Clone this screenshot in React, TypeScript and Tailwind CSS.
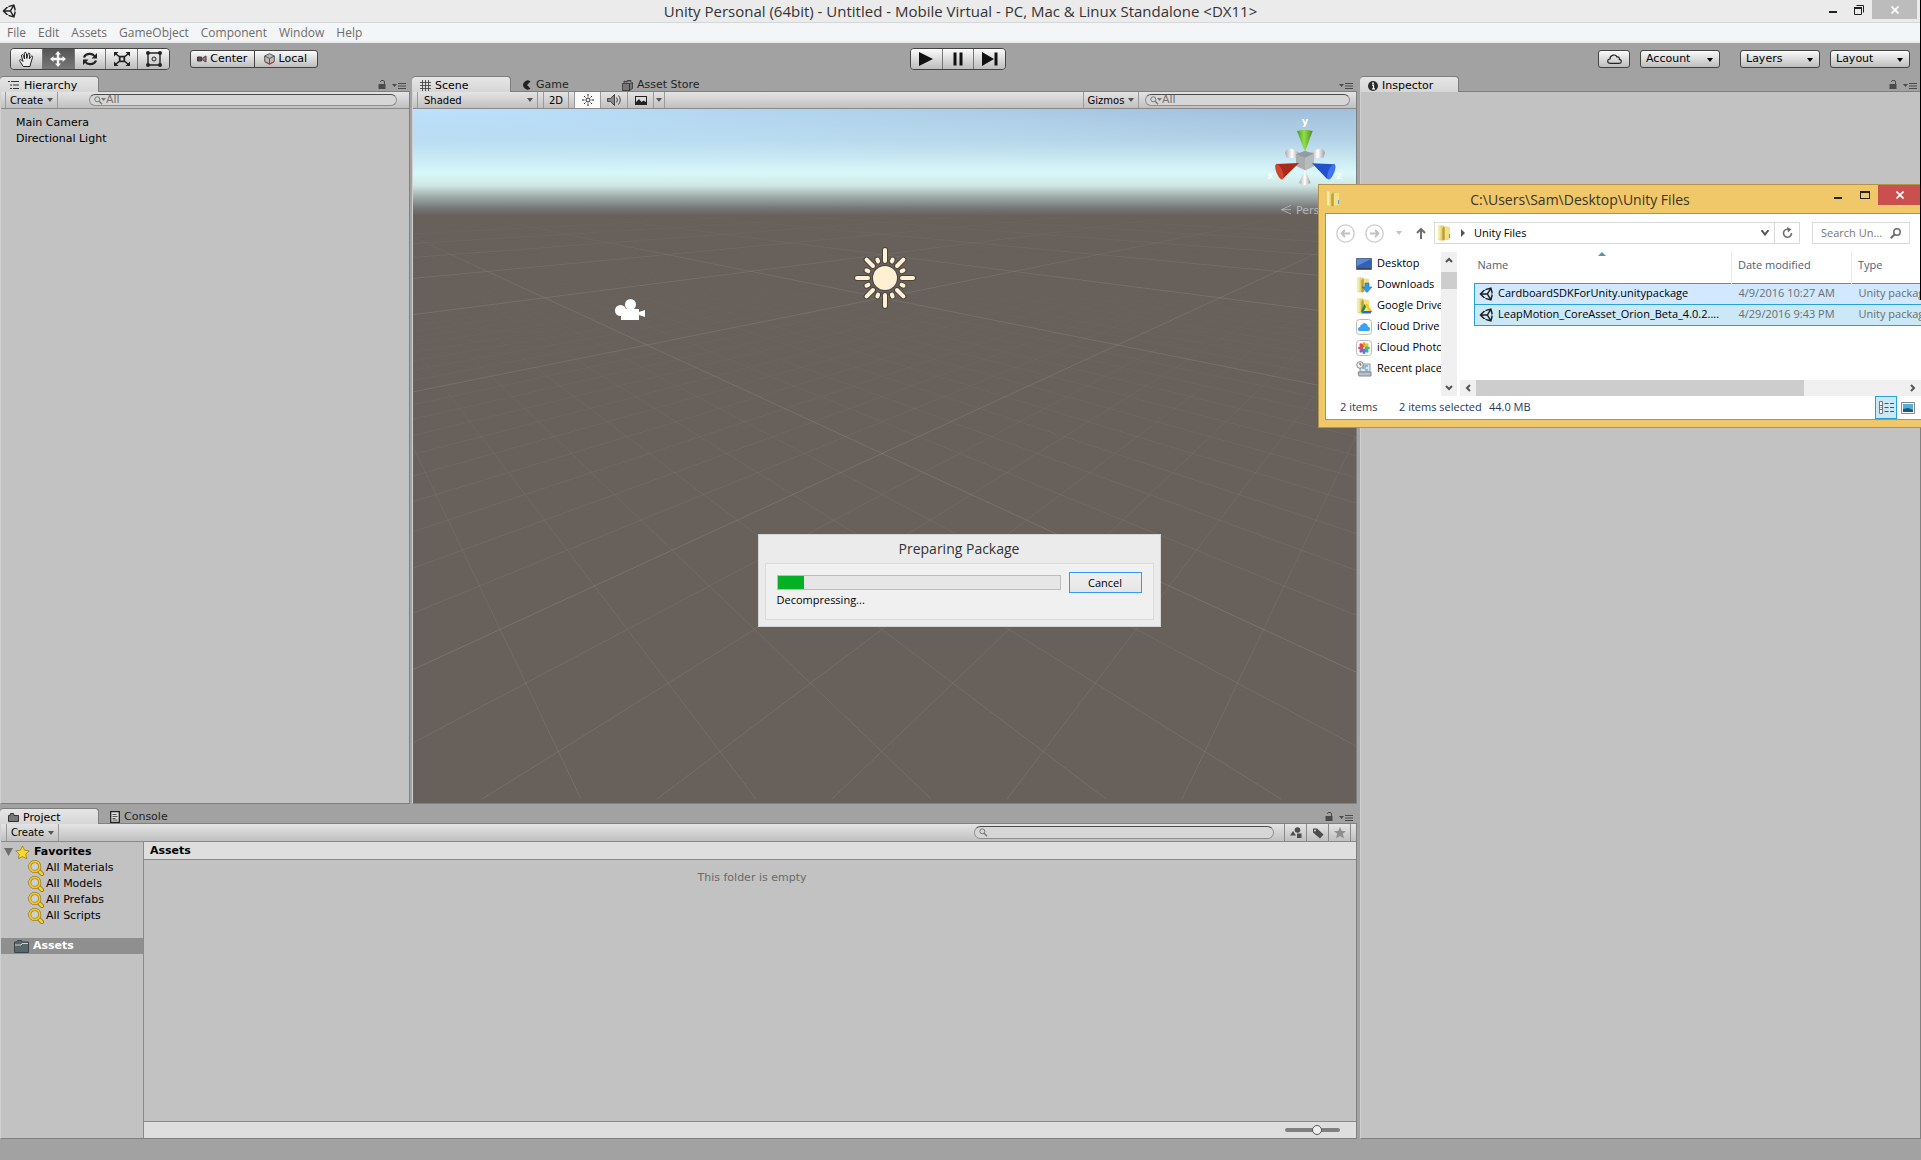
import type { ReactNode } from 'react';
import { FaUnity } from 'react-icons/fa';

type TabProps = { label: string; icon: ReactNode; active?: boolean };

const MENUS = ['File', 'Edit', 'Assets', 'GameObject', 'Component', 'Window', 'Help'];
const FAVORITES = ['All Materials', 'All Models', 'All Prefabs', 'All Scripts'];
const FILES = [
  { name: 'CardboardSDKForUnity.unitypackage', date: '4/9/2016 10:27 AM' },
  { name: 'LeapMotion_CoreAsset_Orion_Beta_4.0.2....', date: '4/29/2016 9:43 PM' },
];

const BUTTON_FACE = 'bg-linear-to-b from-[#fbfbfb] to-[#bdbdbd] text-black';
const STRIP = 'flex shrink-0 items-stretch border-b border-[#8a8a8a] bg-linear-to-b from-[#e4e4e4] to-[#c0c0c0] text-[10px]';

/* ---------- small icons ---------- */

function Caret({ className = '' }: { className?: string }) {
  return (
    <svg viewBox="0 0 6 4" className={`h-1 w-1.5 shrink-0 ${className}`}>
      <path d="M0 0h6L3 4z" fill="currentColor" />
    </svg>
  );
}

function LockIcon() {
  return (
    <svg viewBox="0 0 8 9" className="h-[9px] w-2">
      <path d="M.5 4h7v5h-7z" fill="#4a4a4a" />
      <path d="M2.5 2V1.500Q2.500.500 4 .500H5Q6.500.500 6.500 2V4" fill="none" stroke="#4a4a4a" />
    </svg>
  );
}

function PaneMenu() {
  return (
    <svg viewBox="0 0 14 6" className="h-1.5 w-3.5">
      <path d="M0 1h5L2.500 4z" fill="#4a4a4a" />
      <path d="M6 .5h8M6 3h8M6 5.500h8" stroke="#4a4a4a" />
    </svg>
  );
}

function SearchIcon({ menu = false }: { menu?: boolean }) {
  return (
    <svg viewBox="0 0 12 9" className="h-[9px] w-3 shrink-0">
      <circle cx="3.300" cy="3.300" r="2.500" fill="none" stroke="#777" />
      <path d="M5.200 5.200L8 8.200" stroke="#777" strokeWidth="1.300" />
      {menu && <path d="M7 2h5L9.500 5z" fill="#777" />}
    </svg>
  );
}

function Magnifier() {
  return (
    <svg viewBox="0 0 16 16" className="size-4">
      <path d="M9.500 9.500l4.500 4.500" stroke="#7a6a30" strokeWidth="4" strokeLinecap="round" />
      <path d="M9.500 9.500l4.500 4.500" stroke="#fcd116" strokeWidth="2.600" strokeLinecap="round" />
      <circle cx="6.700" cy="6.500" r="5" fill="#cfcfcf" stroke="#7a6a30" strokeWidth="3" />
      <circle cx="6.700" cy="6.500" r="5" fill="none" stroke="#f5c822" strokeWidth="1.900" />
    </svg>
  );
}

function FolderPair({ children }: { children?: ReactNode }) {
  return (
    <svg viewBox="0 0 16 16" className="size-4 shrink-0">
      <path d="M1 .5h6v15H3L1 14z" fill="#e6d070" />
      <path d="M1 .5h2.500v14L1 14z" fill="#f7eca6" />
      <path d="M6 1.500l7 .5v12l-7 1.500z" fill="#cfb045" />
      <path d="M8 1.700l5 .3v12l-5 1z" fill="#f2e088" />
      <path d="M6 3v12" stroke="#a88c2a" />
      {children ?? <path d="M12.500 9v4" stroke="#4aa3e0" />}
    </svg>
  );
}

/* ---------- shared chrome ---------- */

function Tab({ label, icon, active = false }: TabProps) {
  return (
    <button
      role="tab"
      aria-selected={active}
      className={`relative flex h-4 shrink-0 items-center gap-1 whitespace-nowrap rounded-t-[4px] pt-0.5 text-[11px] leading-[14px] ${
        active
          ? 'z-10 w-[99px] border-t border-r border-[#7e7e7e] bg-linear-to-b from-[#e6e6e6] to-[#d6d6d6] pl-2 text-black'
          : 'w-[100px] pl-[11px] text-[#222]'
      }`}
    >
      {icon}
      {label}
    </button>
  );
}

function Pane({ tabs, locked = true, children, className = '' }: { tabs: ReactNode; locked?: boolean; children?: ReactNode; className?: string }) {
  return (
    <section className={`flex min-h-0 min-w-0 flex-col ${className}`}>
      <div className="flex h-[15px] shrink-0 justify-between pr-1">
        <div role="tablist" className="flex">{tabs}</div>
        <div className="flex items-end gap-1.5 pb-0.5">
          {locked && <LockIcon />}
          <PaneMenu />
        </div>
      </div>
      <div className="flex min-h-0 flex-1 flex-col border border-[#808080] border-l-[#d0d0d0] bg-[#c2c2c2]">{children}</div>
    </section>
  );
}

function SearchBox({ label, menu = false, value = '', className }: { label: string; menu?: boolean; value?: string; className: string }) {
  return (
    <label className={`my-0.5 flex items-center rounded-full border border-[#8f8f8f] border-t-[#4c4c4c] bg-[#d6d6d6] pl-1 ${className}`}>
      <SearchIcon menu={menu} />
      <input aria-label={label} placeholder={value} className="h-3 w-full min-w-0 bg-transparent text-[11px] leading-3 outline-none placeholder:text-[#747474]" />
    </label>
  );
}

function DropDown({ label, className }: { label: string; className: string }) {
  return (
    <div className={`relative h-[18px] rounded-[3px] border border-[#444] ${BUTTON_FACE} ${className}`}>
      <select aria-label={label} className="block h-4 w-full appearance-none bg-transparent pl-[5px] text-[11px] leading-4 outline-none">
        <option>{label}</option>
      </select>
      <Caret className="pointer-events-none absolute right-1.5 top-[7px]" />
    </div>
  );
}

/* ---------- top of the window ---------- */

function TitleBar() {
  return (
    <header className="relative flex h-[23px] shrink-0 items-start justify-between border-b border-[#d4d7da] bg-[#ebebeb] pl-0.5">
      <FaUnity className="mt-[3px] size-4 text-[#222]" />
      <h1 className="absolute inset-x-0 text-center font-['Open_Sans',sans-serif] text-[15px] leading-[23px] text-[#333]">
        Unity Personal (64bit) - Untitled - Mobile Virtual - PC, Mac &amp; Linux Standalone &lt;DX11&gt;
      </h1>
      <div className="relative flex h-[19px] pr-1">
        <button aria-label="Minimize" className="flex w-[26px] items-end justify-center pb-1.5">
          <span className="h-0.5 w-2 bg-[#222]" />
        </button>
        <button aria-label="Restore" className="flex w-[26px] items-center justify-center">
          <svg viewBox="0 0 10 10" className="size-2.5">
            <path d="M2.500 .500H9.500V7.500M.5 3V9.500H7.500V3" fill="none" stroke="#222" />
            <path d="M0 3h8" stroke="#222" strokeWidth="2" />
          </svg>
        </button>
        <button aria-label="Close" className="flex w-[45px] items-center justify-center bg-[#bcbcbc]">
          <svg viewBox="0 0 8 8" className="size-2"><path d="M.5.5l7 7m0-7l-7 7" stroke="#fff" strokeWidth="1.700" /></svg>
        </button>
      </div>
    </header>
  );
}

function ToolButtons() {
  const tools = [
    { name: 'Hand', art: <path d="M5 15L2 10.500C1 8.500 2.500 8 3.500 9L5 10.500 3.500 5C3.200 3.500 5 3 5.500 4.500L6.500 8 6.300 2.500C6.300 1 8.200 1 8.400 2.500L8.800 7.500 10 3C10.300 1.500 12 2 11.800 3.500L11.300 8 13 5.500C14 4.500 15 5 14.500 6.500L12.500 13 12 15.500H5.500z" fill="#eee" stroke="#222" /> },
    { name: 'Move', art: <path d="M8 0l3 3.500H9.200V6.800H12.500V5L16 8l-3.500 3V9.200H9.200v3.300H11L8 16l-3-3.500h1.800V9.200H3.500V11L0 8l3.500-3v1.800h3.300V3.500H5z" fill="#f4f4f4" /> },
    { name: 'Rotate', art: <g fill="none" stroke="#222" strokeWidth="2.200"><path d="M2 6.500C3.500 2 10.500 2 12.500 5" /><path d="M14 9.500C12.500 14 5.500 14 3.500 11" /><path d="M15 2v5.500H9.500zM1 14V8.500h5.500z" fill="#222" stroke="none" /></g> },
    { name: 'Scale', art: <g fill="#222"><path d="M0 1h4.500L0 5.500zM16 1v4.500L11.500 1zM0 15v-4.500L4.500 15zM16 15h-4.500L16 10.500z" /><path d="M1 2l4 3.500M15 2l-4 3.500M1 14l4-3.500M15 14l-4-3.500" stroke="#222" strokeWidth="1.600" /><path d="M5.700 5.700h4.600v4.600H5.700z" fill="#ddd" stroke="#222" strokeWidth="1.800" /></g> },
    { name: 'Rect', art: <g fill="#222"><path d="M2 2h12v12H2z" fill="none" stroke="#222" strokeWidth="1.400" /><circle cx="2" cy="2" r="2" /><circle cx="14" cy="2" r="2" /><circle cx="2" cy="14" r="2" /><circle cx="14" cy="14" r="2" /><circle cx="8" cy="8" r="2" fill="none" stroke="#222" /></g> },
  ];
  return (
    <div className="flex h-[22px] w-40 overflow-hidden rounded-[4px] border border-[#444]">
      {tools.map((tool) => (
        <button
          key={tool.name}
          aria-label={tool.name}
          className={`flex flex-1 items-center justify-center border-r border-[#777] last:border-r-0 ${
            tool.name === 'Move' ? 'bg-linear-to-b from-[#555] to-[#787878]' : BUTTON_FACE
          }`}
        >
          <svg viewBox="0 0 16 16" className="size-4">{tool.art}</svg>
        </button>
      ))}
    </div>
  );
}

function Toolbar() {
  return (
    <div className="grid h-[33px] shrink-0 grid-cols-[1fr_auto_1fr] items-start pl-2.5 pr-[11px] pt-[5px]">
      <div className="flex items-center gap-5">
        <ToolButtons />
        <div className={`flex h-[18px] w-32 items-stretch rounded-[3px] border border-[#444] text-[11px] leading-4 ${BUTTON_FACE}`}>
          <button className="flex flex-1 items-center justify-center gap-[3px] border-r border-[#444]">
            <svg viewBox="0 0 10 8" className="h-2 w-2.5"><path d="M.5 2h4v4h-4z" fill="#555" stroke="#333" /><path d="M5.500 3L9 1v6L5.500 5z" fill="#888" stroke="#444" /><circle cx="5.500" cy="4" r="1" fill="#b44" /></svg>
            Center
          </button>
          <button className="flex flex-1 items-center justify-center gap-[3px]">
            <svg viewBox="0 0 11 12" className="h-3 w-[11px]"><path d="M5.500.7L10.300 3v5.500L5.500 11 .7 8.500V3z" fill="#bbb" stroke="#555" /><path d="M.7 3l4.800 2.500L10.300 3M5.500 5.500V11" fill="none" stroke="#555" /><path d="M1 9l4.500 2.300L10 9" fill="none" stroke="#c33" /></svg>
            Local
          </button>
        </div>
      </div>
      <div className="mr-1 flex h-[22px] w-24 overflow-hidden rounded-[4px] border border-[#444]">
        <button aria-label="Play" className={`flex flex-1 items-center justify-center border-r border-[#777] ${BUTTON_FACE}`}>
          <svg viewBox="0 0 14 14" className="size-3.5"><path d="M0 0l14 7-14 7z" fill="#111" /></svg>
        </button>
        <button aria-label="Pause" className={`flex flex-1 items-center justify-center border-r border-[#777] ${BUTTON_FACE}`}>
          <svg viewBox="0 0 14 14" className="size-3.5"><path d="M2.500 0.500h3v13h-3zM8.500.500h3v13h-3z" fill="#111" /></svg>
        </button>
        <button aria-label="Step" className={`flex flex-1 items-center justify-center ${BUTTON_FACE}`}>
          <svg viewBox="0 0 16 14" className="h-3.5 w-4"><path d="M0 0l12 7-12 7zM12.500.500h3v13h-3z" fill="#111" /></svg>
        </button>
      </div>
      <div className="flex justify-end pt-0.5">
        <button aria-label="Cloud services" className={`mr-2.5 flex h-[18px] w-8 items-center justify-center rounded-[3px] border border-[#444] ${BUTTON_FACE}`}>
          <svg viewBox="0 0 15 10" className="h-2.5 w-[15px]"><path d="M3.500 9.300C-.2 9.300 0 5 3 5 3 1 8.500-.5 10 3c2.500-.3 2.500 1.500 2.300 2.300 3 .5 2.500 4 0 4z" fill="none" stroke="#222" strokeWidth="1.200" /></svg>
        </button>
        <DropDown label="Account" className="mr-5 w-20" />
        <DropDown label="Layers" className="mr-2.5 w-20" />
        <DropDown label="Layout" className="w-20" />
      </div>
    </div>
  );
}

/* ---------- panes ---------- */

const hierarchyIcon = (
  <svg viewBox="0 0 12 9" className="h-[9px] w-3"><path d="M0 .5h2M3 .500h8M2 4h2M5 4h6M2 7.500h2M5 7.500h6" stroke="#333" /></svg>
);
const gridIcon = (
  <svg viewBox="0 0 11 11" className="size-[11px]"><path d="M2.500 0v11M5.500 0v11M8.500 0v11M0 2.500h11M0 5.500h11M0 8.500h11" stroke="#444" strokeWidth=".9" /></svg>
);
const gameIcon = (
  <svg viewBox="0 0 10 10" className="size-2.5"><path d="M8.500 1.500A4.500 4.500 0 1 0 8.500 8.500L5 5z" fill="#222" /></svg>
);
const storeIcon = (
  <svg viewBox="0 0 11 11" className="size-[11px]"><path d="M.5 3.500h7v7h-7zM7.500 3.500l3-1v6l-3 2zM2 3V1l3 1V.5h4V2" fill="#777" stroke="#333" strokeWidth=".8" /></svg>
);
const infoIcon = (
  <svg viewBox="0 0 10 10" className="size-2.5"><circle cx="5" cy="5" r="5" fill="#2b2b2b" /><path d="M4 4.200h1.500v3.600M4 7.800h3" stroke="#fff" fill="none" strokeWidth="1.200" /><circle cx="5" cy="2.200" r=".9" fill="#fff" /></svg>
);
const projectIcon = (
  <svg viewBox="0 0 11 9" className="h-[9px] w-[11px]"><path d="M.5 2.500h1.500l.5-2h3l.5 2h4.500v6H.5z" fill="#777" stroke="#333" /></svg>
);
const consoleIcon = (
  <svg viewBox="0 0 10 12" className="h-3 w-2.5"><path d="M.7.700h8.600v10.600H.7z" fill="#ddd" stroke="#222" strokeWidth="1.300" /><path d="M2.500 3.500h4M2.500 5.500h5M2.500 7.500h3M2.500 9h5" stroke="#333" strokeWidth=".8" /></svg>
);

function Hierarchy() {
  return (
    <Pane tabs={<Tab label="Hierarchy" icon={hierarchyIcon} active />}>
      <div className={`h-[17px] ${STRIP}`}>
        <button className="ml-1 flex w-[53px] items-center justify-center gap-1 border-x border-[#9a9a9a]">
          Create <Caret className="text-[#555]" />
        </button>
        <SearchBox label="Search hierarchy" menu value="All" className="mr-3 ml-[31px] flex-1" />
      </div>
      <ul className="pl-[15px] pt-1.5 text-[11px] leading-4 text-black">
        <li>Main Camera</li>
        <li>Directional Light</li>
      </ul>
    </Pane>
  );
}

// Both families of floor lines meet the lower edge at equal steps and run to their own vanishing point.
const HORIZON = 69;
const FLOOR = 690;
const STEP = 175;

function FloorGrid() {
  const lines: { d: string; major: boolean }[] = [];
  for (let i = -60; i <= 60; i++) {
    const major = i % 10 === 0;
    const left = 1218 + i * STEP;
    const right = -281 + i * STEP;
    lines.push({ d: `M-128 ${HORIZON}L${left} ${FLOOR}`, major });
    lines.push({ d: `M1067 ${HORIZON}L${right} ${FLOOR}`, major });
  }
  return (
    <svg viewBox="0 0 943 694" preserveAspectRatio="none" className="absolute inset-0 size-full">
      <defs>
        <linearGradient id="minor-fade" x1="0" y1="0" x2="0" y2="1">
          <stop offset=".2" stopColor="#000" />
          <stop offset=".5" stopColor="#888" />
          <stop offset="1" stopColor="#fff" />
        </linearGradient>
        <linearGradient id="major-fade" x1="0" y1="0" x2="0" y2="1">
          <stop offset=".14" stopColor="#000" />
          <stop offset=".25" stopColor="#aaa" />
          <stop offset="1" stopColor="#ddd" />
        </linearGradient>
        <mask id="minor"><rect width="943" height="694" fill="url(#minor-fade)" /></mask>
        <mask id="major"><rect width="943" height="694" fill="url(#major-fade)" /></mask>
      </defs>
      <g mask="url(#minor)" stroke="#8a8a86" strokeOpacity=".4">
        {lines.filter((l) => !l.major).map((l) => <path key={l.d} d={l.d} />)}
      </g>
      <g mask="url(#major)" stroke="#8f908b" strokeOpacity=".5">
        {lines.filter((l) => l.major).map((l) => <path key={l.d} d={l.d} />)}
      </g>
    </svg>
  );
}

function AxisGizmo() {
  return (
    <svg viewBox="75 140 240 300" className="absolute right-[11px] top-2 h-[100px] w-20">
      <defs>
        <linearGradient id="cone"><stop stopColor="#aaa" /><stop offset=".5" stopColor="#fff" /><stop offset="1" stopColor="#999" /></linearGradient>
        <linearGradient id="green"><stop stopColor="#4e9a20" /><stop offset=".45" stopColor="#8fe04a" /><stop offset="1" stopColor="#4e8a24" /></linearGradient>
      </defs>
      <path d="M135 247Q140 232 158 236L178 247 168 264 140 262Z" fill="url(#cone)" />
      <path d="M255 247Q250 232 234 236L212 247 222 264 250 262Z" fill="url(#cone)" />
      <path d="M195 297L177 338Q194 350 212 338Z" fill="url(#cone)" />
      <path d="M168 252l27-10 27 8v38l-27 12-27-13z" fill="#a9adb0" />
      <path d="M168 252l27-10 27 8-27 12z" fill="#949ca3" />
      <path d="M195 262l27-12v38l-27 12z" fill="#b8bbbc" />
      <path d="M171 182Q194 176 218 182L195 244z" fill="url(#green)" />
      <path d="M177 278L108 281 128 326z" fill="#a82a1a" />
      <ellipse cx="118" cy="304" rx="9" ry="25" transform="rotate(-22 118 304)" fill="#cf4630" />
      <path d="M216 279L284 282 262 327z" fill="#2350cc" />
      <ellipse cx="274" cy="304" rx="9" ry="25" transform="rotate(22 274 304)" fill="#3f74ee" />
      <g fill="#fff" fontSize="30" fontWeight="bold" textAnchor="middle" className="font-['DejaVu_Sans',sans-serif]">
        <text x="195" y="165">y</text>
        <text x="92" y="325" opacity=".8">x</text>
        <text x="298" y="325" opacity=".8">z</text>
      </g>
      <path d="M153 405L124 418 153 431M126 418H153" fill="none" stroke="#b5b8b6" strokeWidth="2.500" />
    </svg>
  );
}

function LightGizmo() {
  const rays = Array.from({ length: 16 }, (_, i) => i);
  return (
    <svg viewBox="-32 -32 64 64" className="absolute left-1/2 top-[169px] size-16 -translate-x-1/2 -translate-y-1/2">
      {['#4a443f', '#fff0d4'].map((color, layer) => (
        <g key={color} stroke={color} strokeWidth={layer === 0 ? 6 : 4} strokeLinecap="round">
          {rays.map((i) => (
            <path key={i} d={i % 4 === 0 ? 'M0-17V-28' : i % 2 === 0 ? 'M0-17V-26' : 'M0-18V-20'} transform={`rotate(${i * 22.5})`} />
          ))}
        </g>
      ))}
      <circle r="13" fill="#4a443f" />
      <circle r="12" fill="#fff0d4" />
    </svg>
  );
}

function SceneView() {
  return (
    <div className="relative min-h-0 flex-1 overflow-hidden bg-[#67605b]">
      <div className="absolute inset-x-0 top-0 h-[106px] bg-[linear-gradient(#a0bfdc,#b4d3e8_30%,#daf8fa_60%,#cfe8e6_72%,#a3b0ae_82%,#77797a_93%,#67625f)]" />
      <div className="absolute inset-x-0 top-0 h-20 bg-[radial-gradient(ellipse_at_top_left,rgba(190,228,255,0.95),rgba(200,240,255,0.3)_40%,transparent_65%)]" />
      <FloorGrid />
      <AxisGizmo />
      <span className="absolute right-6 top-[94px] w-9 text-[11px] leading-4 text-[#b5b8b6]">Persp</span>
      <svg viewBox="0 0 30 22" className="absolute left-[21.4%] top-[190px] h-[22px] w-[30px]">
        <g fill="#fff"><circle cx="5.500" cy="11.500" r="5.500" /><circle cx="15.500" cy="5.500" r="5.500" /><path d="M6 10h18v3l6-2v7l-6-2v5H6z" /></g>
      </svg>
      <LightGizmo />
    </div>
  );
}

function Scene() {
  return (
    <Pane
      locked={false}
      tabs={
        <>
          <Tab label="Scene" icon={gridIcon} active />
          <Tab label="Game" icon={gameIcon} />
          <Tab label="Asset Store" icon={storeIcon} />
        </>
      }
    >
      <div className={`h-[17px] ${STRIP}`}>
        <div className="relative ml-1 w-[121px] border-x border-[#9a9a9a]">
          <select aria-label="Draw mode" className="block h-4 w-full appearance-none bg-transparent pl-1.5 text-[10px] outline-none">
            <option>Shaded</option>
          </select>
          <Caret className="pointer-events-none absolute right-1 top-1.5 text-[#555]" />
        </div>
        <button className="ml-[5px] w-[26px] border-x border-[#9a9a9a]">2D</button>
        <button aria-label="Lighting" className="ml-[5px] flex w-[27px] items-center justify-center border-x border-[#9a9a9a] bg-[#fafafa]">
          <svg viewBox="0 0 12 12" className="size-3"><circle cx="6" cy="6" r="2" fill="none" stroke="#222" /><path d="M6 0v2.500M6 9.500V12M0 6h2.500M9.500 6H12M2 2l1.500 1.500M8.500 8.500L10 10M2 10l1.500-1.500M8.500 3.500L10 2" stroke="#222" /></svg>
        </button>
        <button aria-label="Audio" className="flex w-[26px] items-center justify-center">
          <svg viewBox="0 0 14 12" className="h-3 w-3.5"><path d="M.5 4.500h3l4-4v11l-4-4h-3z" fill="#888" stroke="#444" /><path d="M9.500 3.500q2 2.500 0 5M11.500 1.500q3.500 4.500 0 9" fill="none" stroke="#444" /></svg>
        </button>
        <button aria-label="Effects" className="flex w-[26px] items-center justify-center border-l border-[#9a9a9a]">
          <svg viewBox="0 0 12 9" className="h-[9px] w-3"><path d="M0 0h12v9H0z" fill="#222" /><path d="M1 6V1h10v5L8.500 4.500 6.500 6 4 3z" fill="#ddd" /></svg>
        </button>
        <button aria-label="Effects menu" className="flex w-3 items-center justify-center border-x border-[#9a9a9a]">
          <Caret className="text-[#555]" />
        </button>
        <button className="ml-auto flex w-14 items-center justify-center gap-1 border-x border-[#9a9a9a]">
          Gizmos <Caret className="text-[#555]" />
        </button>
        <SearchBox label="Search scene" menu value="All" className="ml-1.5 mr-1.5 w-[205px]" />
      </div>
      <SceneView />
    </Pane>
  );
}

function Project() {
  return (
    <Pane
      tabs={
        <>
          <Tab label="Project" icon={projectIcon} active />
          <Tab label="Console" icon={consoleIcon} />
        </>
      }
    >
      <div className={`h-[18px] ${STRIP}`}>
        <button className="ml-[5px] flex w-[53px] items-center justify-center gap-1 border-x border-[#9a9a9a]">
          Create <Caret className="text-[#555]" />
        </button>
        <SearchBox label="Search project" className="ml-auto mr-[10px] w-[300px]" />
        <button aria-label="Filter by type" className="flex w-[22px] items-center justify-center border-l border-[#8a8a8a]">
          <svg viewBox="0 0 12 11" className="h-[11px] w-3"><circle cx="7.500" cy="3" r="2.800" fill="#4c4c4c" /><path d="M0 8.500L3 4l3 4.500zM7 6.500h4.500V11H7z" fill="#4c4c4c" /></svg>
        </button>
        <button aria-label="Filter by label" className="flex w-[22px] items-center justify-center border-l border-[#8a8a8a]">
          <svg viewBox="0 0 12 12" className="size-3"><path d="M1 1.500h4L11.500 7.500 8 11.500 1 5.500z" fill="#4c4c4c" /><circle cx="3" cy="3.500" r=".9" fill="#ddd" /></svg>
        </button>
        <button aria-label="Save search" className="mr-[5px] flex w-[23px] items-center justify-center border-x border-[#8a8a8a]">
          <svg viewBox="0 0 12 12" className="size-3"><path d="M6 0l1.800 4H12L8.800 6.800 10 11.500 6 9l-4 2.500L3.200 6.800 0 4h4.200z" fill="#8e8e8e" /></svg>
        </button>
      </div>
      <div className="flex min-h-0 flex-1 text-[11px] leading-4 text-black">
        <nav className="w-[143px] shrink-0 border-r border-[#8a8a8a] pt-0.5">
          <div className="flex items-center gap-1 pl-[3px] font-bold">
            <svg viewBox="0 0 9 8" className="h-2 w-[9px]"><path d="M0 0h9L4.500 8z" fill="#6e6e6e" /></svg>
            <svg viewBox="0 0 16 16" className="-ml-0.5 size-[15px]"><path d="M8 1l2.200 4.600 5 .6-3.700 3.500 1 5L8 12.300l-4.500 2.400 1-5L.8 6.200l5-.6z" fill="#ffd91c" stroke="#8a7a2a" strokeWidth=".8" /></svg>
            <span>Favorites</span>
          </div>
          <ul>
            {FAVORITES.map((item) => (
              <li key={item} className="flex h-4 items-center gap-0.5 pl-[27px]"><Magnifier /> {item}</li>
            ))}
          </ul>
          <div className="mt-[14px] flex h-4 items-center gap-1 bg-[#8f8f8f] pl-[13px] font-bold text-white">
            <svg viewBox="0 0 15 13" className="h-[13px] w-[15px]"><path d="M.5 2h2l1-1.500h4l1 1.500h6v10.500H.5z" fill="#59666b" stroke="#3c464a" /><path d="M1 5h6l1-1.500h6" fill="none" stroke="#cdd3d5" /></svg>
            Assets
          </div>
        </nav>
        <div className="flex min-w-0 flex-1 flex-col">
          <div className="h-[18px] border-b border-[#8a8a8a] bg-[#dedede] pl-1.5 pt-px font-bold">Assets</div>
          <p className="flex-1 pl-1 pt-2.5 text-center text-[#6a6a6a]">This folder is empty</p>
          <div className="flex h-[17px] items-center justify-end border-t border-[#8a8a8a] bg-[#dedede] pr-4">
            <input
              type="range"
              aria-label="Icon size"
              defaultValue={60}
              className="h-1 w-[55px] appearance-none rounded-full bg-[#808080] [&::-webkit-slider-thumb]:size-2.5 [&::-webkit-slider-thumb]:appearance-none [&::-webkit-slider-thumb]:rounded-full [&::-webkit-slider-thumb]:border [&::-webkit-slider-thumb]:border-[#555] [&::-webkit-slider-thumb]:bg-[#eee]"
            />
          </div>
        </div>
      </div>
    </Pane>
  );
}

/* ---------- floating windows ---------- */

function ProgressDialog() {
  return (
    <div className="pointer-events-none fixed inset-0 z-20 flex items-center justify-center pr-[3px]">
      <div role="dialog" aria-label="Preparing Package" className="pointer-events-auto w-[403px] border border-[#d5d5d5] bg-[#ebebeb] px-1.5 pb-1.5 text-black">
        <h2 className="text-center font-['Open_Sans',sans-serif] text-[14px] leading-7 text-[#333]">Preparing Package</h2>
        <div className="h-[57px] border border-[#dadada] bg-[#f0f0f0] px-[11px] pt-2 font-['Open_Sans',sans-serif] text-[11px]">
          <div className="flex items-center gap-2">
            <div role="progressbar" aria-valuenow={9} aria-label="Decompressing" className="h-[15px] flex-1 border border-[#bcbcbc] bg-[#e6e6e6]">
              <div className="h-full w-[26px] bg-[#06b025]" />
            </div>
            <button className="h-[21px] w-[73px] border border-[#3399ff] bg-linear-to-b from-[#f0f0f0] to-[#e5e5e5] leading-[19px]">Cancel</button>
          </div>
          <p className="-mt-px leading-4">Decompressing...</p>
        </div>
      </div>
    </div>
  );
}

function ScrollArrow({ d }: { d: string }) {
  return (
    <svg viewBox="0 0 16 16" className="size-4 shrink-0 bg-[#f0f0f0]">
      <path d={d} fill="none" stroke="#555" strokeWidth="2" />
    </svg>
  );
}

const places = [
  { name: 'Desktop', icon: <svg viewBox="0 0 16 16" className="size-4 shrink-0"><path d="M.5 2.500h15v11H.5z" fill="#3560b4" stroke="#56698a" /><path d="M1 3h14L1 10z" fill="#5a8ad8" /><path d="M1 12.500h14" stroke="#35455f" /></svg> },
  { name: 'Downloads', icon: <FolderPair><path d="M9 6h4v4h3l-5 5.500L6 10h3z" fill="#2f9be8" stroke="#1e6fb5" strokeWidth=".6" /></FolderPair> },
  { name: 'Google Drive', icon: <FolderPair><path d="M8.500 6h3L16 13h-3z" fill="#f8c51c" /><path d="M8.500 6L5 13l1.500 2.500L10 9z" fill="#18924a" /><path d="M8 13h8l-1.500 2.500H6.500z" fill="#2c66d8" /></FolderPair> },
  { name: 'iCloud Drive', icon: <svg viewBox="0 0 16 16" className="size-4 shrink-0"><rect x=".5" y=".5" width="15" height="15" rx="3" fill="#fdfdfd" stroke="#bbb" /><path d="M4 12Q1.500 11.500 2 9.500 2.500 8 4 8 4 5.500 6 5.500 8 3 10.500 5 12 6 11.800 7.500 14.500 8 14 10.500 13.500 12 12 12z" fill="#3aa2f5" /></svg> },
  { name: 'iCloud Photos', icon: (
    <svg viewBox="0 0 16 16" className="size-4 shrink-0">
      <rect x=".5" y=".5" width="15" height="15" rx="3" fill="#fdfdfd" stroke="#bbb" />
      {['#f59a23', '#c9cf2d', '#5cb85c', '#2fb4a6', '#4285d8', '#8b5fc0', '#d64b8a', '#ea4a32'].map((color, i) => (
        <ellipse key={color} cx="8" cy="4.600" rx="1.700" ry="2.600" fill={color} transform={`rotate(${i * 45} 8 8)`} />
      ))}
    </svg>
  ) },
  { name: 'Recent places', icon: <svg viewBox="0 0 16 16" className="size-4 shrink-0"><path d="M4 3h10v8H4z" fill="#d9e6f0" stroke="#8899a5" /><path d="M6 5h6M6 7h4M9 9h3" stroke="#3d8fce" /><path d="M2 11h13v4H3z" fill="#b9c1c6" stroke="#828a8f" /><circle cx="4" cy="4" r="3.300" fill="#f4f4f4" stroke="#888" /><path d="M4 2v2h1.500" fill="none" stroke="#555" /></svg> },
];

function ExplorerWindow() {
  return (
    <div
      role="dialog"
      aria-label="Unity Files"
      className="fixed right-0 top-[184px] z-30 w-[603px] border border-r-0 border-[#b3924a] bg-[#f0c869] pb-[7px] pl-1.5 font-['Open_Sans',sans-serif] text-[11px] text-black"
    >
      <div className="relative flex h-7 items-start justify-between">
        <div className="ml-px mt-1.5"><FolderPair /></div>
        <h2 className="absolute inset-x-0 pr-[86px] text-center text-[14px] leading-[29px] text-[#3a3426]">C:\Users\Sam\Desktop\Unity Files</h2>
        <div className="relative flex h-5">
          <button aria-label="Minimize folder" className="flex w-[27px] items-end justify-center pb-1.5"><span className="h-0.5 w-2 bg-[#222]" /></button>
          <button aria-label="Maximize folder" className="flex w-[27px] items-center justify-center"><span className="h-2 w-2.5 border border-t-2 border-[#222]" /></button>
          <button aria-label="Close folder" className="flex w-[43px] items-center justify-center bg-[#c9504f]">
            <svg viewBox="0 0 8 8" className="size-2"><path d="M.5.5l7 7m0-7l-7 7" stroke="#fff" strokeWidth="1.700" /></svg>
          </button>
        </div>
      </div>

      <div className="border-y border-l border-[#b3924a] bg-white">
        <div className="flex h-[38px] items-center pl-2.5 pr-[11px]">
          <button aria-label="Back" className="mr-2.5">
            <svg viewBox="0 0 19 19" className="size-[19px]"><circle cx="9.500" cy="9.500" r="8.700" fill="none" stroke="#cbcbcb" strokeWidth="1.300" /><path d="M14 9.500H6M9 6L5.500 9.500 9 13" fill="none" stroke="#c0c0c0" strokeWidth="1.800" /></svg>
          </button>
          <button aria-label="Forward" className="mr-3">
            <svg viewBox="0 0 19 19" className="size-[19px]"><circle cx="9.500" cy="9.500" r="8.700" fill="none" stroke="#cbcbcb" strokeWidth="1.300" /><path d="M5 9.500h8M10 6l3.500 3.500L10 13" fill="none" stroke="#c0c0c0" strokeWidth="1.800" /></svg>
          </button>
          <Caret className="text-[#c4c4c4]" />
          <button aria-label="Up" className="ml-3.5 mr-2">
            <svg viewBox="0 0 10 12" className="h-3 w-2.5"><path d="M5 12V2M1 6l4-4 4 4" fill="none" stroke="#6e6e6e" strokeWidth="2" /></svg>
          </button>
          <div className="flex h-[22px] flex-1 items-center border border-[#d9d9d9] pl-0.5">
            <FolderPair />
            <svg viewBox="0 0 4 8" className="ml-2 h-2 w-1"><path d="M0 0l4 4-4 4z" fill="#555" /></svg>
            <span className="ml-[9px] flex-1">Unity Files</span>
            <svg viewBox="0 0 8 6" className="mr-[5px] h-1.5 w-2"><path d="M.5 0L4 4.500 7.500 0" fill="none" stroke="#555" strokeWidth="2" /></svg>
            <button aria-label="Refresh" className="flex h-full w-[25px] items-center justify-center border-l border-[#d9d9d9]">
              <svg viewBox="0 0 11 12" className="h-3 w-[11px]"><path d="M7 2.500A4 4 0 1 0 9.500 6" fill="none" stroke="#6e6e6e" strokeWidth="1.600" /><path d="M5 0l4.500 2.300L6 5.500z" fill="#6e6e6e" /></svg>
            </button>
          </div>
          <label className="ml-3 flex h-[22px] w-[98px] items-center border border-[#d9d9d9] pl-2">
            <input aria-label="Search Unity Files" placeholder="Search Un..." className="w-[69px] text-[11px] outline-none placeholder:text-[#767676]" />
            <svg viewBox="0 0 11 11" className="size-[11px]"><circle cx="7" cy="4" r="3.200" fill="none" stroke="#6e6e6e" strokeWidth="1.500" /><path d="M4.700 6.300L.7 10.300" stroke="#6e6e6e" strokeWidth="2" /></svg>
          </label>
        </div>

        <div className="flex h-36">
          <ul className="w-[115px] shrink-0 overflow-hidden pl-[30px] pt-px">
            {places.map((place) => (
              <li key={place.name} className="flex h-[21px] items-center gap-[5px] whitespace-nowrap">{place.icon}{place.name}</li>
            ))}
          </ul>
          <div className="flex w-4 shrink-0 flex-col bg-[#f0f0f0]">
            <ScrollArrow d="M5 10l3-3 3 3" />
            <div className="mt-1 h-[17px] bg-[#cdcdcd]" />
            <div className="flex-1" />
            <ScrollArrow d="M5 6l3 3 3-3" />
          </div>
          <div className="ml-[3px] flex min-w-0 flex-1 flex-col overflow-hidden">
            <table className="ml-3.5 w-[460px] table-fixed border-collapse text-left whitespace-nowrap">
              <thead>
                <tr className="h-[31px] text-[#4c607a]">
                  <th className="relative w-[257px] pb-1 pl-[3px] font-normal">
                    Name
                    <svg viewBox="0 0 8 4" className="absolute left-[123px] top-0 h-1 w-2"><path d="M0 4l4-4 4 4z" fill="#5a93b5" /></svg>
                  </th>
                  <th className="w-[120px] border-l border-[#e2ebf4] pb-1 pl-1.5 font-normal">Date modified</th>
                  <th className="border-l border-[#e2ebf4] pb-1 pl-1.5 font-normal">Type</th>
                </tr>
              </thead>
              <tbody>
                {FILES.map((file, i) => (
                  <tr key={file.name} className={`h-[21px] border-y border-[#26a0da] text-[#6d6d6d] ${i === 0 ? 'bg-[#d1e8ff]' : 'bg-[#cbe8f6]'}`}>
                    <td className="border-l border-[#26a0da] pl-1">
                      <span className="flex items-center gap-[3px] text-black"><FaUnity className="size-4 shrink-0 text-[#1e1e1e]" />{file.name}</span>
                    </td>
                    <td className="pl-[7px]">{file.date}</td>
                    <td className="overflow-hidden pl-[7px]">Unity package file</td>
                  </tr>
                ))}
              </tbody>
            </table>
            <div className="mt-auto flex h-4 shrink-0 bg-[#f0f0f0]">
              <ScrollArrow d="M10 5L7 8l3 3" />
              <div className="w-[328px] bg-[#cdcdcd]" />
              <div className="flex-1" />
              <ScrollArrow d="M6 5l3 3-3 3" />
            </div>
          </div>
        </div>

        <div className="flex h-[23px] items-center whitespace-nowrap pl-3.5 pr-1.5 text-[#1e395b]">
          <span className="w-[59px]">2 items</span>
          <span className="w-[90px]">2 items selected</span>
          <span>44.0 MB</span>
          <button aria-label="Details view" className="ml-auto flex h-[23px] w-[22px] items-center justify-center border border-[#26a0da] bg-[#cbe8f6]">
            <svg viewBox="0 0 15 13" className="h-[13px] w-[15px]"><path d="M.5.500h3v12h-3zM.5 4.500h3M.5 8.500h3" fill="#fff" stroke="#777" /><path d="M5.500 2.500h4M11 2.500h4M5.500 6.500h4M11 6.500h4M5.500 10.500h4M11 10.500h4" stroke="#555" /><path d="M1.500 6.500h1" stroke="#c33" /></svg>
          </button>
          <button aria-label="Thumbnail view" className="ml-1">
            <svg viewBox="0 0 14 12" className="h-3 w-3.5"><path d="M.5.500h13v11H.5z" fill="#fff" stroke="#888" /><path d="M2 2h10v8H2z" fill="#54aee0" /><path d="M2 7l5-1 5 2v2H2z" fill="#1d5a6b" /></svg>
          </button>
        </div>
      </div>
    </div>
  );
}

export default function App() {
  return (
    <div className="flex h-screen flex-col overflow-hidden bg-[#a2a2a2] font-['DejaVu_Sans',sans-serif] text-[11px]">
      <TitleBar />
      <nav className="flex h-5 shrink-0 items-center gap-3 border-b-2 border-[#e9ebed] bg-[#f4f5f7] pl-[7px] pt-0.5 font-['Open_Sans',sans-serif] text-[12px] text-[#6d6d6d]">
        {MENUS.map((menu) => <button key={menu}>{menu}</button>)}
      </nav>
      <Toolbar />
      <main className="grid min-h-0 flex-1 grid-cols-[1357fr_561fr] gap-x-[3px]">
        <div className="grid min-h-0 grid-rows-[728fr_331fr] gap-y-1">
          <div className="grid min-h-0 grid-cols-[410fr_945fr] gap-x-0.5">
            <Hierarchy />
            <Scene />
          </div>
          <Project />
        </div>
        <Pane tabs={<Tab label="Inspector" icon={infoIcon} active />} />
      </main>
      <footer className="h-[21px] shrink-0" />
      <ProgressDialog />
      <ExplorerWindow />
      <div className="fixed right-0 top-0 z-40 h-[300px] w-px bg-black" />
    </div>
  );
}
